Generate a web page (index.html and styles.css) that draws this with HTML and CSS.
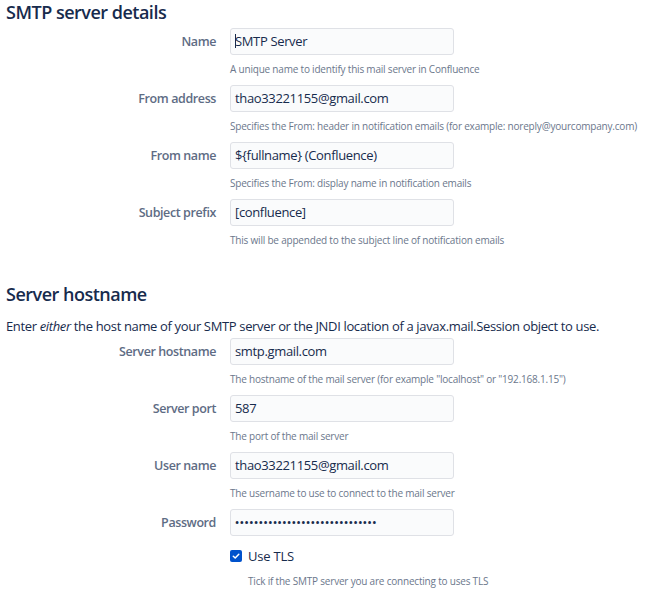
FILE: index.html
```html
<!DOCTYPE html>
<html>
<head>
<meta charset="utf-8">
<link rel="stylesheet" href="styles.css">
</head>
<body>
<h2 class="section-title">SMTP server details</h2>
<div class="field">
  <label class="field-label">Name</label>
  <div class="input"><span class="caret"></span>SMTP Server</div>
  <div class="desc">A unique name to identify this mail server in Confluence</div>
</div>
<div class="field">
  <label class="field-label">From address</label>
  <div class="input">thao33221155@gmail.com</div>
  <div class="desc">Specifies the From: header in notification emails (for example: noreply@yourcompany.com)</div>
</div>
<div class="field">
  <label class="field-label">From name</label>
  <div class="input">${fullname} (Confluence)</div>
  <div class="desc">Specifies the From: display name in notification emails</div>
</div>
<div class="field">
  <label class="field-label">Subject prefix</label>
  <div class="input">[confluence]</div>
  <div class="desc">This will be appended to the subject line of notification emails</div>
</div>

<h2 class="section-title second">Server hostname</h2>
<p class="intro">Enter <em>either</em> the host name of your SMTP server or the JNDI location of a javax.mail.Session object to use.</p>
<div class="field">
  <label class="field-label">Server hostname</label>
  <div class="input">smtp.gmail.com</div>
  <div class="desc">The hostname of the mail server (for example "localhost" or "192.168.1.15")</div>
</div>
<div class="field">
  <label class="field-label">Server port</label>
  <div class="input">587</div>
  <div class="desc">The port of the mail server</div>
</div>
<div class="field">
  <label class="field-label">User name</label>
  <div class="input">thao33221155@gmail.com</div>
  <div class="desc">The username to use to connect to the mail server</div>
</div>
<div class="field">
  <label class="field-label">Password</label>
  <div class="input password">••••••••••••••••••••••••••••••</div>
</div>
<div class="check-row">
  <span class="checkbox"><svg viewBox="0 0 12 12" width="12" height="12"><path d="M3.3 6.2 L5.2 8 L8.8 4.3" fill="none" stroke="#fff" stroke-width="1.5" stroke-linecap="round" stroke-linejoin="round"/></svg></span>
  <span class="check-label">Use TLS</span>
</div>
<div class="check-desc">Tick if the SMTP server you are connecting to uses TLS</div>
</body>
</html>
```
FILE: styles.css
```css
body {
  margin: 0;
  padding: 0 0 0 6px;
  font-family: "Open Sans", "Noto Sans", sans-serif;
  color: #172b4d;
  background: #fff;
}
.section-title {
  margin: 0;
  font-size: 18px;
  font-weight: 600;
  line-height: 24px;
  letter-spacing: -0.5px;
  color: #172b4d;
}
.section-title.second {
  margin-top: 30px;
}
.field {
  display: grid;
  grid-template-columns: 210px 224px;
  column-gap: 14px;
  margin-top: 4px;
}
.intro + .field { margin-top: 3px; }
.field-label {
  text-align: right;
  font-size: 12.5px;
  font-weight: 600;
  letter-spacing: -0.4px;
  color: #5e6c84;
  line-height: 27px;
}
.input {
  box-sizing: border-box;
  height: 27px;
  border: 1px solid #dfe1e6;
  border-radius: 3px;
  background: #fafbfc;
  font-size: 13px;
  letter-spacing: -0.35px;
  line-height: 25px;
  padding: 0 4px;
  color: #172b4d;
  white-space: nowrap;
  overflow: hidden;
}
.caret {
  display: inline-block;
  width: 1px;
  height: 14px;
  margin-right: -1px;
  background: #172b4d;
  vertical-align: -2px;
}
.input.password {
  font-size: 11px;
  letter-spacing: 0.6px;
  font-weight: 600;
}
.desc {
  grid-column: 2;
  font-size: 10px;
  letter-spacing: -0.2px;
  color: #6b778c;
  line-height: 14px;
  padding-top: 7px;
  height: 19px;
  white-space: nowrap;
}
.intro {
  margin: 11px 0 0;
  font-size: 13px;
  letter-spacing: -0.35px;
  line-height: 18px;
}
.check-row {
  display: flex;
  align-items: center;
  margin: 11px 0 0 224px;
  height: 18px;
}
.checkbox {
  width: 12px;
  height: 12px;
  border-radius: 2px;
  background: #0052cc;
  display: inline-flex;
}
.check-label {
  margin-left: 6px;
  font-size: 13px;
  letter-spacing: -0.2px;
  color: #172b4d;
}
.check-desc {
  margin: 9px 0 0 242px;
  font-size: 10px;
  letter-spacing: -0.2px;
  color: #6b778c;
  line-height: 14px;
}
```
